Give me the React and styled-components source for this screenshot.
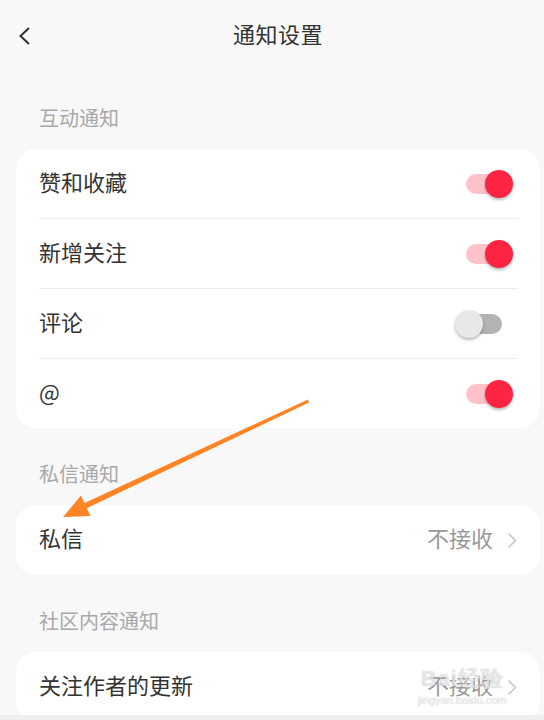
import styled, { createGlobalStyle } from 'styled-components'

const GlobalStyle = createGlobalStyle`
  body {
    margin: 0;
    font-family: "Noto Sans CJK SC", "Noto Sans", sans-serif;
  }
`

const Page = styled.div`
  position: relative;
  width: 544px;
  height: 720px;
  overflow: hidden;
  background-color: #efefef;
`

const Screen = styled.div`
  display: flex;
  flex-direction: column;
  width: 556px;
  height: 715px;
  overflow: hidden;
  background-color: #f8f8f8;
`

const Header = styled.div`
  display: flex;
  align-items: center;
  justify-content: center;
  position: relative;
  height: 66px;
  padding-bottom: 6px;
  flex-shrink: 0;
`

const BackButton = styled.div`
  position: absolute;
  left: 18px;
  top: 26px;
  display: flex;
`

const Title = styled.h1`
  margin: 0;
  font-size: 22px;
  font-weight: 400;
  color: #333;
  letter-spacing: 0.5px;
`

const SectionLabel = styled.div`
  margin: 31px 0 16px 39px;
  height: 30px;
  line-height: 30px;
  font-size: 20px;
  color: #a9a9a9;
  flex-shrink: 0;

  &:first-of-type {
    margin-top: 32px;
  }
`

const Card = styled.div`
  display: flex;
  flex-direction: column;
  margin: 0 16px;
  background-color: #fff;
  border-radius: 20px;
  flex-shrink: 0;
`

const Row = styled.div`
  display: flex;
  align-items: center;
  justify-content: space-between;
  height: ${(p) => p.$height || 69}px;
  padding: 0 ${(p) => p.$padRight || 38}px 0 23px;
`

const Divider = styled.div`
  height: 1px;
  margin: 0 22px 0 23px;
  background-color: #ececec;
`

const Label = styled.span`
  padding-bottom: 6px;
  font-size: 22px;
  color: #333;
`

const Value = styled.div`
  display: flex;
  align-items: center;
  gap: 14px;
  font-size: 22px;
  color: #999;

  span {
    padding-bottom: 6px;
  }
`

const Track = styled.div`
  position: relative;
  width: 36px;
  height: 20px;
  border-radius: 10px;
  background-color: ${(p) => (p.$on ? '#ffc2cb' : '#b3b3b3')};
`

const Knob = styled.div`
  position: absolute;
  top: -4px;
  left: ${(p) => (p.$on ? '19px' : '-11px')};
  width: 28px;
  height: 28px;
  border-radius: 50%;
  background-color: ${(p) => (p.$on ? '#ff2442' : '#e8e8e8')};
  box-shadow: 0 2px 3px rgba(0, 0, 0, 0.28);
`

const Overlay = styled.svg`
  position: absolute;
  left: 0;
  top: 0;
  pointer-events: none;
`

const Watermark = styled.div`
  position: absolute;
  left: 418px;
  top: 664px;
  display: flex;
  flex-direction: column;
  align-items: center;
  color: rgba(255, 255, 255, 0.6);
  text-shadow: 0 0 1px rgba(150, 150, 150, 0.6);
  font-family: "Liberation Sans", sans-serif;
  pointer-events: none;
`

const MarkTitle = styled.span`
  font-size: 22px;
  font-weight: 700;
  letter-spacing: 1px;
`

const MarkUrl = styled.span`
  font-size: 11px;
`

const Toggle = ({ on }) => (
  <Track $on={on}>
    <Knob $on={on} />
  </Track>
)

const Chevron = () => (
  <svg width="10" height="17" viewBox="0 0 10 17">
    <path d="M1.5 1.5 L8.5 8.5 L1.5 15.5" fill="none" stroke="#c8c8c8" strokeWidth="1.6" />
  </svg>
)

const switches = [
  { label: '赞和收藏', on: true },
  { label: '新增关注', on: true },
  { label: '评论', on: false },
  { label: '@', on: true },
]

export default function App() {
  return (
    <Page>
      <GlobalStyle />
      <Screen>
        <Header>
          <BackButton>
            <svg width="14" height="20" viewBox="0 0 14 20">
              <path d="M11 2 L2.5 10 L11 18" fill="none" stroke="#333" strokeWidth="2" />
            </svg>
          </BackButton>
          <Title>通知设置</Title>
        </Header>

        <SectionLabel>互动通知</SectionLabel>
        <Card>
          {switches.map((s, i) => (
            <div key={s.label}>
              {i > 0 && <Divider />}
              <Row>
                <Label>{s.label}</Label>
                <Toggle on={s.on} />
              </Row>
            </div>
          ))}
        </Card>

        <SectionLabel>私信通知</SectionLabel>
        <Card>
          <Row $height={70} $padRight={23}>
            <Label>私信</Label>
            <Value>
              <span>不接收</span>
              <Chevron />
            </Value>
          </Row>
        </Card>

        <SectionLabel>社区内容通知</SectionLabel>
        <Card>
          <Row $height={70} $padRight={23}>
            <Label>关注作者的更新</Label>
            <Value>
              <span>不接收</span>
              <Chevron />
            </Value>
          </Row>
        </Card>
      </Screen>

      <Watermark>
        <MarkTitle>Bai经验</MarkTitle>
        <MarkUrl>jingyan.baidu.com</MarkUrl>
      </Watermark>

      <Overlay width="544" height="720" viewBox="0 0 544 720">
        <polygon points="308,399.5 309,402.5 86,508.5 83.5,503.5" fill="#ff8426" />
        <polygon points="63,517 81,495.5 90.5,516" fill="#ff8426" />
      </Overlay>
    </Page>
  )
}
